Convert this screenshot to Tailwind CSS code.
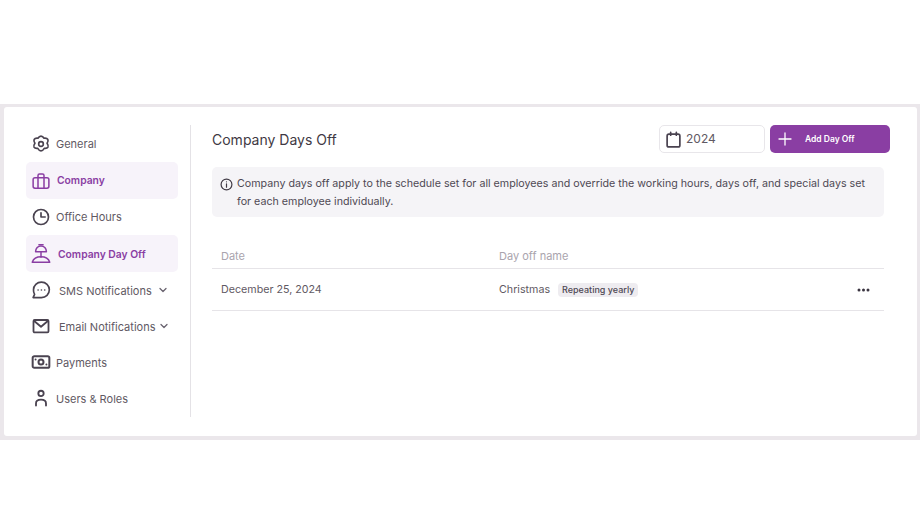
<!DOCTYPE html>
<html lang="en">
<head>
    <meta charset="UTF-8">
    <meta name="viewport" content="width=device-width, initial-scale=1.0">
    <title>Company Days Off</title>
    <script src="https://cdn.jsdelivr.net/npm/@tailwindcss/browser@4"></script>
</head>
<body class="bg-white h-[517px] overflow-hidden font-['Inter',sans-serif] text-[#5f5963]">
    <div class="mt-[104px] h-[336px] bg-[#ebe7eb] pt-[3px] pb-[4px] pl-[4px] pr-[3px]">
        <div class="h-[329px] bg-white rounded-[3px] flex pl-[22px] pr-[33px] pt-[18px]">
            <!-- sidebar -->
            <nav class="w-[165px] h-[292px] border-r border-[#e4e2e6] pr-[12px] text-[11px] shrink-0">
                <div class="h-[37px] flex items-center pl-[5px] gap-[5px]">
                    <svg class="w-[20px] h-[20px] text-[#4a4350]" viewBox="0 0 24 24" fill="none" stroke="currentColor" stroke-width="2" stroke-linejoin="round"><path d="M12 2.500c1.700 0 2.900 1.300 3.700 2.600 1.700-.2 3.700 0 4.500 1.500.8 1.500 0 3.100-.9 4.500.9 1.400 2 3.100 1.100 4.700-.9 1.500-2.800 1.600-4.500 1.400-.9 1.500-2.200 3.100-3.900 3.100s-3-1.600-3.900-3.100c-1.700.2-3.600.1-4.500-1.400-.9-1.600.2-3.300 1.100-4.700-.9-1.400-1.700-3-.9-4.500.8-1.500 2.800-1.700 4.500-1.500C9.100 3.800 10.300 2.500 12 2.500z"/><circle cx="12" cy="12" r="2.800"/></svg>
                    <span class="mt-[2px]">General</span>
                </div>
                <div class="h-[37px] flex items-center pl-[6px] gap-[7px] rounded-[5px] bg-[#f7f3fa] text-[#8a3ea3] font-semibold text-[10.3px]">
                    <svg class="w-[18px] h-[18px]" viewBox="0 0 24 24" fill="none" stroke="currentColor" stroke-width="2" stroke-linejoin="round"><rect x="1.500" y="7.500" width="21" height="14" rx="2.500"/><path d="M8 21.500V4.500a2 2 0 0 1 2-2h4a2 2 0 0 1 2 2v17"/></svg>
                    <span>Company</span>
                </div>
                <div class="h-[36px] flex items-center pl-[5px] gap-[5px]">
                    <svg class="w-[20px] h-[20px] text-[#4a4350]" viewBox="0 0 24 24" fill="none" stroke="currentColor" stroke-width="2" stroke-linecap="round" stroke-linejoin="round"><circle cx="12" cy="12" r="9"/><path d="M12 7v5h5"/></svg>
                    <span>Office Hours</span>
                </div>
                <div class="h-[37px] flex items-center pl-[5px] gap-[7px] rounded-[5px] bg-[#f7f3fa] text-[#8a3ea3] font-semibold text-[10.3px] pt-[1px]">
                    <svg class="w-[20px] h-[20px] -mt-[2px]" viewBox="0 0 24 24" fill="none" stroke="currentColor" stroke-width="1.800" stroke-linecap="round" stroke-linejoin="round"><path d="M5.500 10.500c0-4 2.900-7 6.500-7s6.500 3 6.500 7z"/><path d="M9.500 2h5"/><path d="M12 10.500V17"/><path d="M1.500 23c1.500-4.500 5.700-6.500 10.500-6.500s9 2 10.500 6.500z"/></svg>
                    <span class="mt-[2px]">Company Day Off</span>
                </div>
                <div class="h-[36px] flex items-center pl-[5px] gap-[8px]">
                    <svg class="w-[20px] h-[20px] text-[#4a4350]" viewBox="0 0 24 24" fill="none" stroke="currentColor" stroke-width="2" stroke-linecap="round" stroke-linejoin="round"><path d="M12.500 2.500c5.300 0 9.500 4 9.500 9.300s-4.200 9.300-9.500 9.300H2.500l1.800-3.900A9.300 9.300 0 0 1 3 11.800c0-5.300 4.200-9.300 9.500-9.300z"/><path d="M8.500 12h.01M12.500 12h.01M16.500 12h.01"/></svg>
                    <span class="whitespace-nowrap mt-[2px]">SMS Notifications</span>
                    <svg class="w-[10px] h-[10px] -ml-[2px] text-[#6a6470]" viewBox="0 0 10 10" fill="none" stroke="currentColor" stroke-width="1.300" stroke-linecap="round" stroke-linejoin="round"><path d="M2 3.500l3 3 3-3"/></svg>
                </div>
                <div class="h-[36px] flex items-center pl-[6px] gap-[9px]">
                    <svg class="w-[18px] h-[18px] text-[#4a4350]" viewBox="0 0 24 24" fill="none" stroke="currentColor" stroke-width="2.400" stroke-linejoin="round"><rect x="2" y="4" width="20" height="16.500" rx="1.500"/><path d="M2.500 5l9.500 8 9.500-8"/></svg>
                    <span class="whitespace-nowrap mt-[2px]">Email Notifications</span>
                    <svg class="w-[10px] h-[10px] -ml-[5px] text-[#6a6470]" viewBox="0 0 10 10" fill="none" stroke="currentColor" stroke-width="1.300" stroke-linecap="round" stroke-linejoin="round"><path d="M2 3.500l3 3 3-3"/></svg>
                </div>
                <div class="h-[36px] flex items-center pl-[5px] gap-[5px]">
                    <svg class="w-[20px] h-[20px] text-[#4a4350]" viewBox="0 0 24 24" fill="none" stroke="currentColor" stroke-width="2.400" stroke-linejoin="round"><rect x="2" y="5" width="20" height="14" rx="2"/><circle cx="12" cy="12" r="3"/><path d="M5.500 9v0M18.500 15v0" stroke-linecap="round"/></svg>
                    <span class="mt-[2px]">Payments</span>
                </div>
                <div class="h-[36px] flex items-center pl-[5px] gap-[5px]">
                    <svg class="w-[20px] h-[20px] text-[#4a4350]" viewBox="0 0 24 24" fill="none" stroke="currentColor" stroke-width="2.200" stroke-linecap="round"><circle cx="12" cy="6.500" r="3.200"/><path d="M6 21v-2.500c0-2.800 2.500-4.500 6-4.500s6 1.700 6 4.500V21"/></svg>
                    <span class="mt-[2px]">Users &amp; Roles</span>
                </div>
            </nav>
            <!-- content -->
            <main class="flex-1 min-w-0 pl-[21px]">
                <div class="flex items-center h-[28px]">
                    <h1 class="text-[14px] font-normal text-[#3f3944]">Company Days Off</h1>
                    <div class="ml-auto w-[106px] h-[28px] border border-[#e8e6ea] rounded-[5px] flex items-center pl-[5px] gap-[4px] text-[12px]">
                        <svg class="w-[17px] h-[17px] text-[#4a4350]" viewBox="0 0 24 24" fill="none" stroke="currentColor" stroke-width="2.400" stroke-linejoin="round" stroke-linecap="round"><rect x="3" y="4.500" width="18" height="18" rx="2.500"/><path d="M8 2v4M16 2v4"/></svg>
                        <span>2024</span>
                    </div>
                    <button class="ml-[5px] -mr-[6px] w-[120px] h-[28px] rounded-[5px] bg-[#8a3ea3] text-white text-[8.5px] font-semibold flex items-center pl-[8px] gap-[13px]">
                        <svg class="w-[14px] h-[14px]" viewBox="0 0 14 14" fill="none" stroke="currentColor" stroke-width="1.300" stroke-linecap="round"><path d="M7 1v12M1 7h12"/></svg>
                        <span>Add Day Off</span>
                    </button>
                </div>
                <div class="mt-[14px] h-[50px] rounded-[5px] bg-[#f5f4f7] flex pl-[8px] pr-[8px] pt-[8px] gap-[4px] text-[10.7px] leading-[18px] text-[#4f4954]">
                    <svg class="w-[13px] h-[13px] mt-[3px] shrink-0 text-[#3f3944]" viewBox="0 0 24 24" fill="none" stroke="currentColor" stroke-width="2.200" stroke-linecap="round"><circle cx="12" cy="12" r="10"/><path d="M12 11v6M12 7h.01"/></svg>
                    <p>Company days off apply to the schedule set for all employees and override the working hours, days off, and special days set for each employee individually.</p>
                </div>
                <div class="mt-[30px] h-[22px] flex items-center border-b border-[#e6e4e8] text-[11px] text-[#a9a4ad] pb-[3px]">
                    <span class="w-[287px] pl-[9px]">Date</span>
                    <span>Day off name</span>
                </div>
                <div class="h-[42px] flex items-center border-b border-[#e6e4e8] text-[10.7px] pt-[1px]">
                    <span class="w-[287px] pl-[9px]">December 25, 2024</span>
                    <span>Christmas</span>
                    <span class="ml-[8px] h-[14px] px-[4px] rounded-[4px] bg-[#eeecf0] text-[9px] leading-[14px] font-medium text-[#4f4954]">Repeating yearly</span>
                    <svg class="ml-auto mr-[14px] w-[13px] h-[4px] text-[#3a3440]" viewBox="0 0 13 4" fill="currentColor"><circle cx="2" cy="2" r="1.500"/><circle cx="6.500" cy="2" r="1.500"/><circle cx="11" cy="2" r="1.500"/></svg>
                </div>
            </main>
        </div>
    </div>
</body>
</html>
